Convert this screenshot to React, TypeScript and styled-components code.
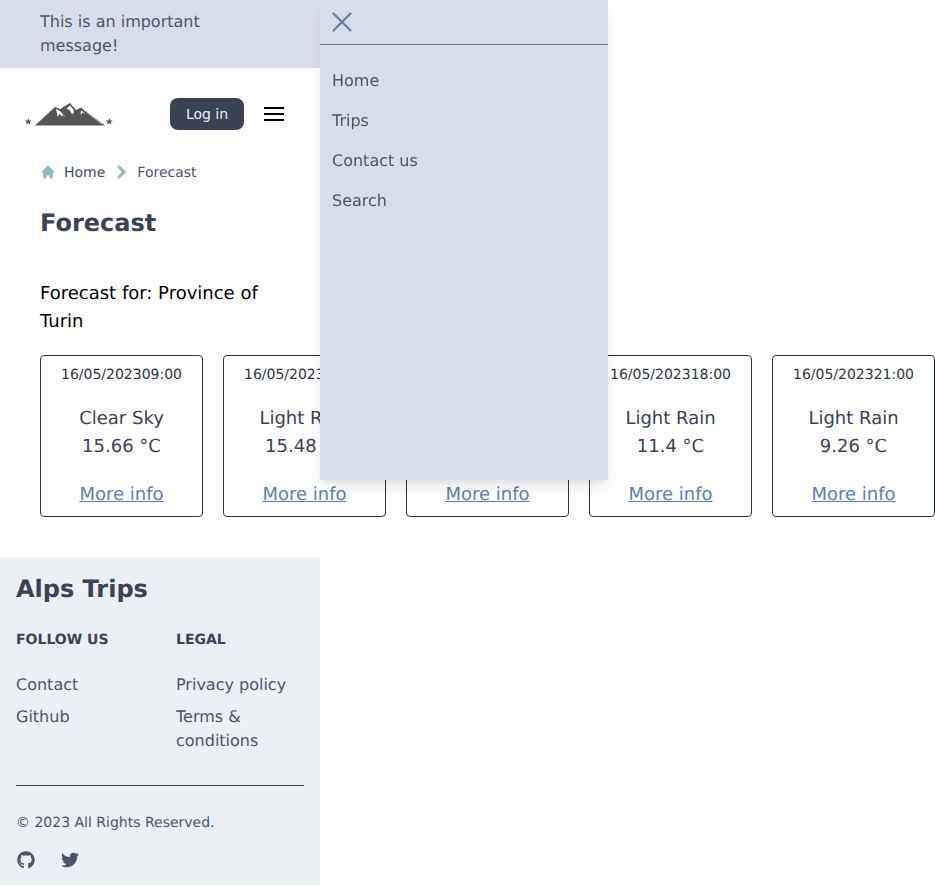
import styled, { createGlobalStyle } from "styled-components";
import { FaGithub, FaTwitter } from "react-icons/fa";
import { HiHome } from "react-icons/hi";

const forecasts = [
  { date: "16/05/2023", time: "09:00", sky: "Clear Sky", temp: "15.66 °C" },
  { date: "16/05/2023", time: "12:00", sky: "Light Rain", temp: "15.48 °C" },
  { date: "16/05/2023", time: "15:00", sky: "Light Rain", temp: "13.2 °C" },
  { date: "16/05/2023", time: "18:00", sky: "Light Rain", temp: "11.4 °C" },
  { date: "16/05/2023", time: "21:00", sky: "Light Rain", temp: "9.26 °C" },
];

const Logo = () => (
  <LogoSvg viewBox="0 0 88 24" aria-hidden="true">
    <path d="M3.300 16l.9 2.400 2.600.1-2 1.600.7 2.500-2.200-1.400-2.200 1.400.7-2.500-2-1.600 2.600-.1z" fill="#555" />
    <path d="M84.300 16l.9 2.400 2.600.1-2 1.600.7 2.500-2.200-1.400-2.200 1.400.7-2.500-2-1.600 2.600-.1z" fill="#555" />
    <path d="M10 23.500 30 5l5 2 10-6 6 7 5-2.500 24 18z" fill="#555" />
    <path d="M31 7l4 2 6 6.500-3.500-2.800-.5 2-2.500-3-1.700 3.300-1-4.500z" fill="#fff" />
    <path d="M45 3.500l-3.500 3.300 3 1.200 3 5V10.500l1.800 1L48 7z" fill="#fff" />
    <path d="M56.500 8.500l-1 1.500.4 3 1.500-2.200 3 1.500z" fill="#fff" />
    <path d="M57.500 7 77 22" stroke="#fff" strokeWidth="0.6" fill="none" />
  </LogoSvg>
);

const Hamburger = () => (
  <BurgerSvg viewBox="0 0 20 14" aria-hidden="true">
    <path d="M0 1h20M0 7h20M0 13h20" stroke="#000" strokeWidth="2" />
  </BurgerSvg>
);

const CloseIcon = () => (
  <CloseSvg viewBox="0 0 20 20" aria-hidden="true">
    <path d="M1.500 1.500l17 17M18.500 1.500l-17 17" stroke="#5e81ac" strokeWidth="2.200" strokeLinecap="round" />
  </CloseSvg>
);

const Chevron = () => (
  <ChevronSvg viewBox="0 0 24 24" aria-hidden="true">
    <path d="M9 6l6 6-6 6" stroke="#8fbcbb" strokeWidth="2.800" fill="none" />
  </ChevronSvg>
);

const App = () => {
  return (
    <>
      <GlobalStyle />
      <Page>
        <Banner>This is an important message!</Banner>
        <Header>
          <LogoLink href="#">
            <Logo />
          </LogoLink>
          <HeaderActions>
            <LoginButton>Log in</LoginButton>
            <MenuButton aria-label="Open menu">
              <Hamburger />
            </MenuButton>
          </HeaderActions>
        </Header>
        <Main>
          <Breadcrumb>
            <HomeGlyph />
            <Crumb href="#" $strong>
              Home
            </Crumb>
            <Chevron />
            <Crumb href="#">Forecast</Crumb>
          </Breadcrumb>
          <Title>Forecast</Title>
          <Subtitle>Forecast for: Province of Turin</Subtitle>
          <CardRow>
            {forecasts.map((f) => (
              <Card key={f.time}>
                <CardDate>
                  <span>{f.date}</span>
                  <span>{f.time}</span>
                </CardDate>
                <CardBody>
                  <div>{f.sky}</div>
                  <div>{f.temp}</div>
                </CardBody>
                <MoreLink href="#">More info</MoreLink>
              </Card>
            ))}
          </CardRow>
        </Main>
        <Footer>
          <Brand>Alps Trips</Brand>
          <FooterColumns>
            <FooterColumn>
              <ColumnTitle>Follow us</ColumnTitle>
              <FooterLink href="#">Contact</FooterLink>
              <FooterLink href="#">Github</FooterLink>
            </FooterColumn>
            <FooterColumn>
              <ColumnTitle>Legal</ColumnTitle>
              <FooterLink href="#">Privacy policy</FooterLink>
              <FooterLink href="#">Terms &amp; conditions</FooterLink>
            </FooterColumn>
          </FooterColumns>
          <Divider />
          <Copyright>© 2023 All Rights Reserved.</Copyright>
          <Socials>
            <SocialLink href="#" aria-label="Github">
              <FaGithub />
            </SocialLink>
            <SocialLink href="#" aria-label="Twitter">
              <FaTwitter />
            </SocialLink>
          </Socials>
        </Footer>
      </Page>
      <Drawer>
        <DrawerHead>
          <CloseButton aria-label="Close menu">
            <CloseIcon />
          </CloseButton>
        </DrawerHead>
        <DrawerNav>
          <DrawerLink href="#">Home</DrawerLink>
          <DrawerLink href="#">Trips</DrawerLink>
          <DrawerLink href="#">Contact us</DrawerLink>
          <DrawerLink href="#">Search</DrawerLink>
        </DrawerNav>
      </Drawer>
    </>
  );
};

const GlobalStyle = createGlobalStyle`
  html, body {
    margin: 0;
    padding: 0;
    background: #fff;
    overflow: hidden;
  }
  body {
    font-family: "DejaVu Sans", sans-serif;
    font-size: 16px;
    line-height: 24px;
    color: #3b4252;
    text-rendering: geometricPrecision;
    -webkit-font-smoothing: antialiased;
  }
  * { box-sizing: border-box; }
`;

const Page = styled.div`
  width: 320px;
`;

const Banner = styled.div`
  height: 68px;
  padding: 10px 100px 10px 40px;
  background: #d8dee9;
  color: #4c566a;
`;

const Header = styled.header`
  display: flex;
  align-items: center;
  justify-content: space-between;
  height: 92px;
  padding: 0 36px 0 25px;
`;

const LogoLink = styled.a`
  display: flex;
`;

const LogoSvg = styled.svg`
  width: 88px;
  height: 24px;
  overflow: visible;
`;

const HeaderActions = styled.div`
  display: flex;
  align-items: center;
  gap: 20px;
`;

const LoginButton = styled.button`
  width: 74px;
  height: 32px;
  padding: 0;
  border: 0;
  border-radius: 8px;
  background: #3b4252;
  color: #eceff4;
  font: inherit;
  font-size: 14px;
`;

const MenuButton = styled.button`
  display: flex;
  padding: 0;
  border: 0;
  background: none;
`;

const BurgerSvg = styled.svg`
  width: 20px;
  height: 14px;
`;

const Main = styled.main`
  padding: 0 0 40px 40px;
`;

const Breadcrumb = styled.nav`
  display: flex;
  align-items: center;
  height: 24px;
  font-size: 14px;
`;

const HomeGlyph = styled(HiHome)`
  width: 16px;
  height: 16px;
  color: #8fbcbb;
`;

const ChevronSvg = styled.svg`
  width: 24px;
  height: 24px;
  margin: 0 4px;
`;

const Crumb = styled.a<{ $strong?: boolean }>`
  margin-left: ${(p) => (p.$strong ? "8px" : "0")};
  padding-top: 2px;
  color: ${(p) => (p.$strong ? "#434c5e" : "#4c566a")};
  text-decoration: none;
`;

const Title = styled.h1`
  margin: 23px 0 0;
  font-size: 24px;
  line-height: 32px;
  font-weight: 700;
  color: #3b4252;
`;

const Subtitle = styled.p`
  width: 240px;
  margin: 41px 0 0;
  font-size: 18px;
  line-height: 28px;
  color: #000;
`;

const CardRow = styled.div`
  display: flex;
  gap: 20px;
  width: max-content;
  margin-top: 19px;
`;

const Card = styled.article`
  display: flex;
  flex-direction: column;
  align-items: center;
  width: 163px;
  height: 162px;
  border: 1px solid #2e3440;
  border-radius: 4px;
  padding-top: 7px;
  text-align: center;
`;

const CardDate = styled.div`
  font-size: 14px;
  line-height: 24px;
  color: #2e3440;
`;

const CardBody = styled.div`
  margin-top: 18px;
  font-size: 18px;
  line-height: 28px;
  color: #3b4252;
`;

const MoreLink = styled.a`
  margin-top: 20px;
  font-size: 18px;
  line-height: 28px;
  color: #5e81ac;
  text-decoration: underline;
`;

const Footer = styled.footer`
  height: 328px;
  padding: 16px;
  background: #eceff4;
`;

const Brand = styled.div`
  font-size: 24px;
  line-height: 32px;
  font-weight: 700;
  color: #3b4252;
`;

const FooterColumns = styled.div`
  display: grid;
  grid-template-columns: 160px 1fr;
  margin-top: 25px;
`;

const FooterColumn = styled.div`
  display: flex;
  flex-direction: column;
  align-items: flex-start;
`;

const ColumnTitle = styled.h2`
  margin: 0 0 23px;
  font-size: 14px;
  line-height: 20px;
  font-weight: 700;
  text-transform: uppercase;
  color: #3b4252;
`;

const FooterLink = styled.a`
  margin-bottom: 8px;
  color: #4c566a;
  text-decoration: none;
`;

const Divider = styled.hr`
  margin: 24px 0 0;
  border: 0;
  border-top: 1px solid #3b4252;
`;

const Copyright = styled.p`
  margin: 25px 0 0;
  font-size: 14px;
  line-height: 24px;
  color: #4c566a;
`;

const Socials = styled.div`
  display: flex;
  gap: 26px;
  margin-top: 16px;
  padding-left: 1px;
`;

const SocialLink = styled.a`
  display: flex;
  color: #4c566a;
  font-size: 18px;
`;

const Drawer = styled.aside`
  position: fixed;
  top: 0;
  left: 320px;
  width: 288px;
  height: 480px;
  background: #d8dee9;
  box-shadow: 0 10px 15px -3px rgba(0, 0, 0, 0.1), 0 4px 6px -2px rgba(0, 0, 0, 0.05);
`;

const DrawerHead = styled.div`
  display: flex;
  align-items: center;
  height: 45px;
  padding: 0 12px;
  border-bottom: 1px solid #5e81ac;
`;

const CloseButton = styled.button`
  display: flex;
  padding: 0;
  border: 0;
  background: none;
`;

const CloseSvg = styled.svg`
  width: 20px;
  height: 20px;
`;

const DrawerNav = styled.nav`
  display: flex;
  flex-direction: column;
  gap: 16px;
  padding: 24px 12px;
`;

const DrawerLink = styled.a`
  color: #4c566a;
  text-decoration: none;
`;

export default App;
